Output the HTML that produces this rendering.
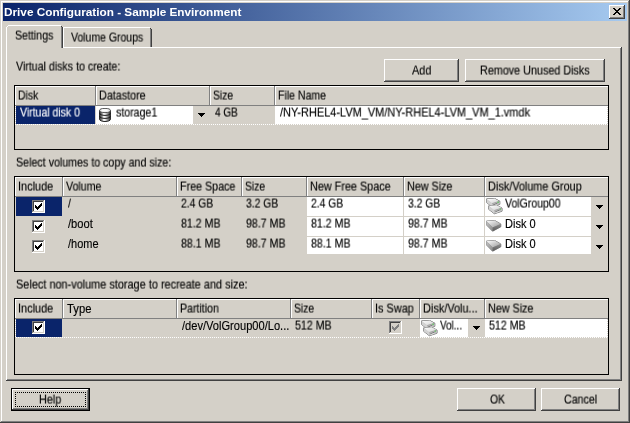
<!DOCTYPE html>
<html><head><meta charset="utf-8"><title>Drive Configuration - Sample Environment</title>
<style>
html,body{margin:0;padding:0;}
body{width:630px;height:423px;overflow:hidden;background:#d4d0c8;position:relative;font-family:"Liberation Sans",sans-serif;font-size:11px;}
#w{position:absolute;left:0;top:0;width:630px;height:423px;overflow:hidden;background:#d4d0c8;}
#w div,#w span,#w svg{position:absolute;display:block;}
.t{line-height:13px;height:13px;white-space:nowrap;font-size:11px;transform:scaleY(1.14);transform-origin:0 10.3px;will-change:transform;-webkit-text-stroke-width:0.13px;}
.b{-webkit-text-stroke-width:0;}
</style></head><body><div id="w">
<div style="left:1px;top:1px;width:627px;height:1px;background:#fff;"></div>
<div style="left:1px;top:1px;width:1px;height:420px;background:#fff;"></div>
<div style="left:628px;top:1px;width:1px;height:421px;background:#808080;"></div>
<div style="left:1px;top:421px;width:628px;height:1px;background:#808080;"></div>
<div style="left:629px;top:0px;width:1px;height:423px;background:#404040;"></div>
<div style="left:0px;top:422px;width:630px;height:1px;background:#404040;"></div>
<div style="left:3px;top:3px;width:624px;height:18px;background:linear-gradient(to right,#0a246a,#a6caf0);"></div>
<span class="t b" style="left:4.0px;top:6px;color:#fff;transform:scale(1.0702,1);font-weight:bold;">Drive Configuration - Sample Environment</span>
<div style="left:609px;top:5px;width:16px;height:14px;background:#404040;"></div>
<div style="left:609px;top:5px;width:15px;height:13px;background:#fff;"></div>
<div style="left:610px;top:6px;width:14px;height:12px;background:#808080;"></div>
<div style="left:610px;top:6px;width:13px;height:11px;background:#d4d0c8;"></div>
<svg style="left:613px;top:8px" width="8" height="7" viewBox="0 0 8 7"><path d="M0 0h2v1h1v1h2v-1h1v-1h2v1h-1v1h-1v1h-1v1h1v1h1v1h1v1h-2v-1h-1v-1h-2v1h-1v1h-2v-1h1v-1h1v-1h1v-1h-1v-1h-1v-1h-1z" fill="#000" shape-rendering="crispEdges"/></svg>
<div style="left:6px;top:47px;width:615px;height:1px;background:#fff;"></div>
<div style="left:6px;top:47px;width:1px;height:333px;background:#fff;"></div>
<div style="left:620px;top:48px;width:1px;height:332px;background:#808080;"></div>
<div style="left:7px;top:379px;width:614px;height:1px;background:#808080;"></div>
<div style="left:621px;top:47px;width:1px;height:334px;background:#404040;"></div>
<div style="left:6px;top:380px;width:616px;height:1px;background:#404040;"></div>
<div style="left:63px;top:27px;width:87px;height:1px;background:#fff;"></div>
<div style="left:63px;top:28px;width:1px;height:19px;background:#fff;"></div>
<div style="left:150px;top:28px;width:1px;height:1px;background:#404040;"></div>
<div style="left:150px;top:29px;width:1px;height:18px;background:#808080;"></div>
<div style="left:151px;top:29px;width:1px;height:18px;background:#404040;"></div>
<div style="left:6px;top:25px;width:57px;height:23px;background:#d4d0c8;"></div>
<div style="left:8px;top:25px;width:53px;height:1px;background:#fff;"></div>
<div style="left:6px;top:27px;width:1px;height:21px;background:#fff;"></div>
<div style="left:7px;top:26px;width:1px;height:1px;background:#fff;"></div>
<div style="left:61px;top:26px;width:1px;height:1px;background:#404040;"></div>
<div style="left:61px;top:27px;width:1px;height:21px;background:#808080;"></div>
<div style="left:62px;top:27px;width:1px;height:21px;background:#404040;"></div>
<span class="t " style="left:15.0px;top:30px;color:#000;transform:scale(0.9635,1.14);">Settings</span>
<span class="t " style="left:71.0px;top:32px;color:#000;transform:scale(0.9519,1.14);">Volume Groups</span>
<span class="t " style="left:16.0px;top:61px;color:#000;transform:scale(0.9657,1.14);">Virtual disks to create:</span>
<span class="t " style="left:16.0px;top:157px;color:#000;transform:scale(0.9692,1.14);">Select volumes to copy and size:</span>
<span class="t " style="left:16.0px;top:279px;color:#000;transform:scale(0.9912,1.14);">Select non-volume storage to recreate and size:</span>
<div style="left:384px;top:59px;width:75px;height:23px;background:#404040;"></div>
<div style="left:384px;top:59px;width:74px;height:22px;background:#fff;"></div>
<div style="left:385px;top:60px;width:73px;height:21px;background:#808080;"></div>
<div style="left:385px;top:60px;width:72px;height:20px;background:#d4d0c8;"></div>
<span class="t " style="left:412.0px;top:65px;color:#000;transform:scale(0.987,1.14);">Add</span>
<div style="left:465px;top:59px;width:140px;height:23px;background:#404040;"></div>
<div style="left:465px;top:59px;width:139px;height:22px;background:#fff;"></div>
<div style="left:466px;top:60px;width:138px;height:21px;background:#808080;"></div>
<div style="left:466px;top:60px;width:137px;height:20px;background:#d4d0c8;"></div>
<span class="t " style="left:480.0px;top:65px;color:#000;transform:scale(0.9807,1.14);">Remove Unused Disks</span>
<div style="left:11px;top:388px;width:79px;height:23px;background:#000;"></div>
<div style="left:12px;top:389px;width:77px;height:21px;background:#404040;"></div>
<div style="left:12px;top:389px;width:76px;height:20px;background:#fff;"></div>
<div style="left:13px;top:390px;width:75px;height:19px;background:#808080;"></div>
<div style="left:13px;top:390px;width:74px;height:18px;background:#d4d0c8;"></div>
<span class="t " style="left:39.0px;top:394px;color:#000;transform:scale(0.9823,1.14);">Help</span>
<div style="left:15px;top:392px;width:71px;height:15px;background:transparent;outline:1px dotted #000;outline-offset:-1px;"></div>
<div style="left:457px;top:388px;width:79px;height:23px;background:#404040;"></div>
<div style="left:457px;top:388px;width:78px;height:22px;background:#fff;"></div>
<div style="left:458px;top:389px;width:77px;height:21px;background:#808080;"></div>
<div style="left:458px;top:389px;width:76px;height:20px;background:#d4d0c8;"></div>
<span class="t " style="left:490.0px;top:394px;color:#000;transform:scale(0.94,1.14);">OK</span>
<div style="left:541px;top:388px;width:79px;height:23px;background:#404040;"></div>
<div style="left:541px;top:388px;width:78px;height:22px;background:#fff;"></div>
<div style="left:542px;top:389px;width:77px;height:21px;background:#808080;"></div>
<div style="left:542px;top:389px;width:76px;height:20px;background:#d4d0c8;"></div>
<span class="t " style="left:564.0px;top:394px;color:#000;transform:scale(0.9673,1.14);">Cancel</span>
<div style="left:14px;top:85px;width:595px;height:65px;background:#000;"></div>
<div style="left:15px;top:86px;width:593px;height:63px;background:#d4d0c8;"></div>
<div style="left:15px;top:86px;width:593px;height:1px;background:#fff;"></div>
<div style="left:15px;top:105px;width:593px;height:1px;background:#808080;"></div>
<div style="left:15px;top:86px;width:1px;height:19px;background:#fff;"></div>
<div style="left:95px;top:86px;width:1px;height:20px;background:#808080;"></div>
<span class="t " style="left:18.0px;top:90px;color:#000;transform:scale(0.94,1.14);">Disk</span>
<div style="left:96px;top:86px;width:1px;height:19px;background:#fff;"></div>
<div style="left:209px;top:86px;width:1px;height:20px;background:#808080;"></div>
<span class="t " style="left:99.0px;top:90px;color:#000;transform:scale(0.9793,1.14);">Datastore</span>
<div style="left:210px;top:86px;width:1px;height:19px;background:#fff;"></div>
<div style="left:274px;top:86px;width:1px;height:20px;background:#808080;"></div>
<span class="t " style="left:213.0px;top:90px;color:#000;transform:scale(0.94,1.14);">Size</span>
<div style="left:275px;top:86px;width:1px;height:19px;background:#fff;"></div>
<span class="t " style="left:278.0px;top:90px;color:#000;transform:scale(0.9584,1.14);">File Name</span>
<div style="left:16px;top:106px;width:79px;height:18px;background:#0a246a;"></div>
<span class="t " style="left:20.0px;top:107px;color:#fff;transform:scale(0.9543,1.14);">Virtual disk 0</span>
<div style="left:96px;top:106px;width:97px;height:18px;background:#fff;"></div>
<span class="t " style="left:116.0px;top:107px;color:#000;transform:scale(0.9623,1.14);">storage1</span>
<div style="left:198px;top:113px;width:7px;height:1px;background:#000;"></div>
<div style="left:199px;top:114px;width:5px;height:1px;background:#000;"></div>
<div style="left:200px;top:115px;width:3px;height:1px;background:#000;"></div>
<div style="left:201px;top:116px;width:1px;height:1px;background:#000;"></div>
<span class="t " style="left:215.0px;top:107px;color:#000;transform:scale(0.9032,1.14);">4 GB</span>
<div style="left:275px;top:106px;width:333px;height:18px;background:#fff;"></div>
<span class="t " style="left:280.0px;top:107px;color:#000;transform:scale(0.9976,1.14);">/NY-RHEL4-LVM_VM/NY-RHEL4-LVM_VM_1.vmdk</span>
<div style="left:15px;top:124px;width:593px;height:1px;background:repeating-linear-gradient(to right,#fff 0,#fff 1px,#d4d0c8 1px,#d4d0c8 2px);"></div>
<div style="left:15px;top:106px;width:1px;height:18px;background:repeating-linear-gradient(to bottom,#fff 0,#fff 1px,#d4d0c8 1px,#d4d0c8 2px);"></div>
<div style="left:607px;top:106px;width:1px;height:18px;background:repeating-linear-gradient(to bottom,#fff 0,#fff 1px,#d4d0c8 1px,#d4d0c8 2px);"></div>
<svg style="left:99px;top:108px" width="12" height="14" viewBox="0 0 12 14">
<defs><linearGradient id="cg" x1="0" x2="1"><stop offset="0" stop-color="#3a3a3a"/><stop offset=".22" stop-color="#8a8a8a"/><stop offset=".38" stop-color="#ffffff"/><stop offset=".5" stop-color="#f0f0f0"/><stop offset=".72" stop-color="#9a9a9a"/><stop offset="1" stop-color="#2a2a2a"/></linearGradient></defs>
<path d="M.6 2.500v8.800c0 1.300 2.400 2.200 5.400 2.200s5.400-.9 5.400-2.200v-8.800z" fill="url(#cg)" stroke="#222" stroke-width="1"/>
<path d="M.6 5.300c0 1.200 2.400 2.100 5.400 2.100s5.400-.9 5.400-2.100M.6 8.300c0 1.200 2.400 2.100 5.400 2.100s5.400-.9 5.400-2.100" fill="none" stroke="#1a1a1a" stroke-width="1"/>
<ellipse cx="6" cy="2.500" rx="5.400" ry="2.100" fill="#ececec" stroke="#444" stroke-width=".9"/>
<ellipse cx="5.500" cy="2.300" rx="3.200" ry="1" fill="#fff"/>
</svg>
<div style="left:14px;top:176px;width:595px;height:96px;background:#000;"></div>
<div style="left:15px;top:177px;width:593px;height:94px;background:#d4d0c8;"></div>
<div style="left:15px;top:177px;width:593px;height:1px;background:#fff;"></div>
<div style="left:15px;top:196px;width:593px;height:1px;background:#808080;"></div>
<div style="left:15px;top:177px;width:1px;height:19px;background:#fff;"></div>
<div style="left:62px;top:177px;width:1px;height:20px;background:#808080;"></div>
<span class="t " style="left:18.0px;top:181px;color:#000;transform:scale(0.9929,1.14);">Include</span>
<div style="left:63px;top:177px;width:1px;height:19px;background:#fff;"></div>
<div style="left:176px;top:177px;width:1px;height:20px;background:#808080;"></div>
<span class="t " style="left:66.0px;top:181px;color:#000;transform:scale(0.9649,1.14);">Volume</span>
<div style="left:177px;top:177px;width:1px;height:19px;background:#fff;"></div>
<div style="left:241px;top:177px;width:1px;height:20px;background:#808080;"></div>
<span class="t " style="left:180.0px;top:181px;color:#000;transform:scale(0.9725,1.14);">Free Space</span>
<div style="left:242px;top:177px;width:1px;height:19px;background:#fff;"></div>
<div style="left:306px;top:177px;width:1px;height:20px;background:#808080;"></div>
<span class="t " style="left:245.0px;top:181px;color:#000;transform:scale(0.94,1.14);">Size</span>
<div style="left:307px;top:177px;width:1px;height:19px;background:#fff;"></div>
<div style="left:403px;top:177px;width:1px;height:20px;background:#808080;"></div>
<span class="t " style="left:310.0px;top:181px;color:#000;transform:scale(0.9851,1.14);">New Free Space</span>
<div style="left:404px;top:177px;width:1px;height:19px;background:#fff;"></div>
<div style="left:484px;top:177px;width:1px;height:20px;background:#808080;"></div>
<span class="t " style="left:407.0px;top:181px;color:#000;transform:scale(0.9803,1.14);">New Size</span>
<div style="left:485px;top:177px;width:1px;height:19px;background:#fff;"></div>
<span class="t " style="left:488.0px;top:181px;color:#000;transform:scale(0.9881,1.14);">Disk/Volume Group</span>
<div style="left:16px;top:197px;width:46px;height:19px;background:#0a246a;"></div>
<div style="left:32px;top:200px;width:13px;height:13px;background:#fff;"></div>
<div style="left:32px;top:200px;width:12px;height:12px;background:#808080;"></div>
<div style="left:33px;top:201px;width:11px;height:11px;background:#d4d0c8;"></div>
<div style="left:33px;top:201px;width:10px;height:10px;background:#404040;"></div>
<div style="left:34px;top:202px;width:9px;height:9px;background:#fff;"></div>
<div style="left:35px;top:205px;width:1px;height:3px;background:#000;"></div>
<div style="left:36px;top:206px;width:1px;height:3px;background:#000;"></div>
<div style="left:37px;top:207px;width:1px;height:3px;background:#000;"></div>
<div style="left:38px;top:206px;width:1px;height:3px;background:#000;"></div>
<div style="left:39px;top:205px;width:1px;height:3px;background:#000;"></div>
<div style="left:40px;top:204px;width:1px;height:3px;background:#000;"></div>
<div style="left:41px;top:203px;width:1px;height:3px;background:#000;"></div>
<span class="t " style="left:68.0px;top:198px;color:#000;transform:scale(0.94,1.14);">/</span>
<span class="t " style="left:181.0px;top:198px;color:#000;transform:scale(0.94,1.14);">2.4 GB</span>
<span class="t " style="left:246.0px;top:198px;color:#000;transform:scale(0.94,1.14);">3.2 GB</span>
<div style="left:307px;top:197px;width:96px;height:19px;background:#fff;"></div>
<span class="t " style="left:311.0px;top:198px;color:#000;transform:scale(0.94,1.14);">2.4 GB</span>
<div style="left:404px;top:197px;width:80px;height:19px;background:#fff;"></div>
<span class="t " style="left:408.0px;top:198px;color:#000;transform:scale(0.94,1.14);">3.2 GB</span>
<div style="left:485px;top:197px;width:106px;height:19px;background:#fff;"></div>
<span class="t " style="left:505.0px;top:198px;color:#000;transform:scale(0.9557,1.14);">VolGroup00</span>
<div style="left:596px;top:205px;width:7px;height:1px;background:#000;"></div>
<div style="left:597px;top:206px;width:5px;height:1px;background:#000;"></div>
<div style="left:598px;top:207px;width:3px;height:1px;background:#000;"></div>
<div style="left:599px;top:208px;width:1px;height:1px;background:#000;"></div>
<div style="left:32px;top:220px;width:13px;height:13px;background:#fff;"></div>
<div style="left:32px;top:220px;width:12px;height:12px;background:#808080;"></div>
<div style="left:33px;top:221px;width:11px;height:11px;background:#d4d0c8;"></div>
<div style="left:33px;top:221px;width:10px;height:10px;background:#404040;"></div>
<div style="left:34px;top:222px;width:9px;height:9px;background:#fff;"></div>
<div style="left:35px;top:225px;width:1px;height:3px;background:#000;"></div>
<div style="left:36px;top:226px;width:1px;height:3px;background:#000;"></div>
<div style="left:37px;top:227px;width:1px;height:3px;background:#000;"></div>
<div style="left:38px;top:226px;width:1px;height:3px;background:#000;"></div>
<div style="left:39px;top:225px;width:1px;height:3px;background:#000;"></div>
<div style="left:40px;top:224px;width:1px;height:3px;background:#000;"></div>
<div style="left:41px;top:223px;width:1px;height:3px;background:#000;"></div>
<span class="t " style="left:68.0px;top:218px;color:#000;transform:scale(1.0136,1.14);">/boot</span>
<span class="t " style="left:181.0px;top:218px;color:#000;transform:scale(0.9629,1.14);">81.2 MB</span>
<span class="t " style="left:246.0px;top:218px;color:#000;transform:scale(0.9629,1.14);">98.7 MB</span>
<div style="left:307px;top:217px;width:96px;height:19px;background:#fff;"></div>
<span class="t " style="left:311.0px;top:218px;color:#000;transform:scale(0.9629,1.14);">81.2 MB</span>
<div style="left:404px;top:217px;width:80px;height:19px;background:#fff;"></div>
<span class="t " style="left:408.0px;top:218px;color:#000;transform:scale(0.9629,1.14);">98.7 MB</span>
<div style="left:485px;top:217px;width:106px;height:19px;background:#fff;"></div>
<span class="t " style="left:505.0px;top:218px;color:#000;transform:scale(1.0027,1.14);">Disk 0</span>
<div style="left:596px;top:225px;width:7px;height:1px;background:#000;"></div>
<div style="left:597px;top:226px;width:5px;height:1px;background:#000;"></div>
<div style="left:598px;top:227px;width:3px;height:1px;background:#000;"></div>
<div style="left:599px;top:228px;width:1px;height:1px;background:#000;"></div>
<div style="left:32px;top:240px;width:13px;height:13px;background:#fff;"></div>
<div style="left:32px;top:240px;width:12px;height:12px;background:#808080;"></div>
<div style="left:33px;top:241px;width:11px;height:11px;background:#d4d0c8;"></div>
<div style="left:33px;top:241px;width:10px;height:10px;background:#404040;"></div>
<div style="left:34px;top:242px;width:9px;height:9px;background:#fff;"></div>
<div style="left:35px;top:245px;width:1px;height:3px;background:#000;"></div>
<div style="left:36px;top:246px;width:1px;height:3px;background:#000;"></div>
<div style="left:37px;top:247px;width:1px;height:3px;background:#000;"></div>
<div style="left:38px;top:246px;width:1px;height:3px;background:#000;"></div>
<div style="left:39px;top:245px;width:1px;height:3px;background:#000;"></div>
<div style="left:40px;top:244px;width:1px;height:3px;background:#000;"></div>
<div style="left:41px;top:243px;width:1px;height:3px;background:#000;"></div>
<span class="t " style="left:68.0px;top:238px;color:#000;transform:scale(1.0004,1.14);">/home</span>
<span class="t " style="left:181.0px;top:238px;color:#000;transform:scale(0.9629,1.14);">88.1 MB</span>
<span class="t " style="left:246.0px;top:238px;color:#000;transform:scale(0.9629,1.14);">98.7 MB</span>
<div style="left:307px;top:237px;width:96px;height:17px;background:#fff;"></div>
<span class="t " style="left:311.0px;top:238px;color:#000;transform:scale(0.9629,1.14);">88.1 MB</span>
<div style="left:404px;top:237px;width:80px;height:17px;background:#fff;"></div>
<span class="t " style="left:408.0px;top:238px;color:#000;transform:scale(0.9629,1.14);">98.7 MB</span>
<div style="left:485px;top:237px;width:106px;height:17px;background:#fff;"></div>
<span class="t " style="left:505.0px;top:238px;color:#000;transform:scale(1.0027,1.14);">Disk 0</span>
<div style="left:596px;top:245px;width:7px;height:1px;background:#000;"></div>
<div style="left:597px;top:246px;width:5px;height:1px;background:#000;"></div>
<div style="left:598px;top:247px;width:3px;height:1px;background:#000;"></div>
<div style="left:599px;top:248px;width:1px;height:1px;background:#000;"></div>
<div style="left:14px;top:298px;width:595px;height:77px;background:#000;"></div>
<div style="left:15px;top:299px;width:593px;height:75px;background:#d4d0c8;"></div>
<div style="left:15px;top:299px;width:593px;height:1px;background:#fff;"></div>
<div style="left:15px;top:318px;width:593px;height:1px;background:#808080;"></div>
<div style="left:15px;top:299px;width:1px;height:19px;background:#fff;"></div>
<div style="left:62px;top:299px;width:1px;height:20px;background:#808080;"></div>
<span class="t " style="left:18.0px;top:303px;color:#000;transform:scale(0.9929,1.14);">Include</span>
<div style="left:63px;top:299px;width:1px;height:19px;background:#fff;"></div>
<div style="left:176px;top:299px;width:1px;height:20px;background:#808080;"></div>
<span class="t " style="left:67.0px;top:303px;color:#000;transform:scale(1.0244,1.14);">Type</span>
<div style="left:177px;top:299px;width:1px;height:19px;background:#fff;"></div>
<div style="left:290px;top:299px;width:1px;height:20px;background:#808080;"></div>
<span class="t " style="left:180.0px;top:303px;color:#000;transform:scale(0.9635,1.14);">Partition</span>
<div style="left:291px;top:299px;width:1px;height:19px;background:#fff;"></div>
<div style="left:371px;top:299px;width:1px;height:20px;background:#808080;"></div>
<span class="t " style="left:294.0px;top:303px;color:#000;transform:scale(0.94,1.14);">Size</span>
<div style="left:372px;top:299px;width:1px;height:19px;background:#fff;"></div>
<div style="left:419px;top:299px;width:1px;height:20px;background:#808080;"></div>
<span class="t " style="left:375.0px;top:303px;color:#000;transform:scale(0.9883,1.14);">Is Swap</span>
<div style="left:420px;top:299px;width:1px;height:19px;background:#fff;"></div>
<div style="left:484px;top:299px;width:1px;height:20px;background:#808080;"></div>
<span class="t " style="left:423.0px;top:303px;color:#000;transform:scale(0.9908,1.14);">Disk/Volu...</span>
<div style="left:485px;top:299px;width:1px;height:19px;background:#fff;"></div>
<span class="t " style="left:488.0px;top:303px;color:#000;transform:scale(0.9803,1.14);">New Size</span>
<div style="left:16px;top:319px;width:46px;height:18px;background:#0a246a;"></div>
<div style="left:32px;top:321px;width:13px;height:13px;background:#fff;"></div>
<div style="left:32px;top:321px;width:12px;height:12px;background:#808080;"></div>
<div style="left:33px;top:322px;width:11px;height:11px;background:#d4d0c8;"></div>
<div style="left:33px;top:322px;width:10px;height:10px;background:#404040;"></div>
<div style="left:34px;top:323px;width:9px;height:9px;background:#fff;"></div>
<div style="left:35px;top:326px;width:1px;height:3px;background:#000;"></div>
<div style="left:36px;top:327px;width:1px;height:3px;background:#000;"></div>
<div style="left:37px;top:328px;width:1px;height:3px;background:#000;"></div>
<div style="left:38px;top:327px;width:1px;height:3px;background:#000;"></div>
<div style="left:39px;top:326px;width:1px;height:3px;background:#000;"></div>
<div style="left:40px;top:325px;width:1px;height:3px;background:#000;"></div>
<div style="left:41px;top:324px;width:1px;height:3px;background:#000;"></div>
<span class="t " style="left:182.0px;top:320px;color:#000;transform:scale(1.0084,1.14);">/dev/VolGroup00/Lo...</span>
<span class="t " style="left:295.0px;top:320px;color:#000;transform:scale(0.9649,1.14);">512 MB</span>
<div style="left:389px;top:321px;width:13px;height:13px;background:#fff;"></div>
<div style="left:389px;top:321px;width:12px;height:12px;background:#808080;"></div>
<div style="left:390px;top:322px;width:11px;height:11px;background:#d4d0c8;"></div>
<div style="left:390px;top:322px;width:10px;height:10px;background:#404040;"></div>
<div style="left:391px;top:323px;width:9px;height:9px;background:#d4d0c8;"></div>
<div style="left:392px;top:326px;width:1px;height:3px;background:#808080;"></div>
<div style="left:393px;top:327px;width:1px;height:3px;background:#808080;"></div>
<div style="left:394px;top:328px;width:1px;height:3px;background:#808080;"></div>
<div style="left:395px;top:327px;width:1px;height:3px;background:#808080;"></div>
<div style="left:396px;top:326px;width:1px;height:3px;background:#808080;"></div>
<div style="left:397px;top:325px;width:1px;height:3px;background:#808080;"></div>
<div style="left:398px;top:324px;width:1px;height:3px;background:#808080;"></div>
<div style="left:420px;top:319px;width:48px;height:18px;background:#fff;"></div>
<span class="t " style="left:440.0px;top:320px;color:#000;transform:scale(0.9,1.14);">Vol...</span>
<div style="left:473px;top:326px;width:7px;height:1px;background:#000;"></div>
<div style="left:474px;top:327px;width:5px;height:1px;background:#000;"></div>
<div style="left:475px;top:328px;width:3px;height:1px;background:#000;"></div>
<div style="left:476px;top:329px;width:1px;height:1px;background:#000;"></div>
<div style="left:485px;top:319px;width:123px;height:18px;background:#fff;"></div>
<span class="t " style="left:489.0px;top:320px;color:#000;transform:scale(0.9649,1.14);">512 MB</span>
<div style="left:15px;top:337px;width:593px;height:1px;background:repeating-linear-gradient(to right,#d4d0c8 0,#d4d0c8 1px,#fff 1px,#fff 2px);"></div>
<div style="left:15px;top:319px;width:1px;height:18px;background:repeating-linear-gradient(to bottom,#d4d0c8 0,#d4d0c8 1px,#fff 1px,#fff 2px);"></div>
<div style="left:607px;top:319px;width:1px;height:18px;background:repeating-linear-gradient(to bottom,#d4d0c8 0,#d4d0c8 1px,#fff 1px,#fff 2px);"></div>
<svg width="0" height="0" style="left:0;top:0"><defs><linearGradient id="dg" x1="0" y1="0" x2="1" y2="1"><stop offset="0" stop-color="#ffffff"/><stop offset=".4" stop-color="#d6d6d6"/><stop offset="1" stop-color="#989898"/></linearGradient><linearGradient id="vg" x1="0" y1="0" x2="1" y2="1"><stop offset="0" stop-color="#ffffff"/><stop offset=".6" stop-color="#e4e4e4"/><stop offset="1" stop-color="#c2c2c2"/></linearGradient><linearGradient id="dl" x1="0" y1="0" x2="1" y2="1"><stop offset="0" stop-color="#c4c4c4"/><stop offset="1" stop-color="#8a8a8a"/></linearGradient><linearGradient id="df" x1="0" y1="0" x2="0" y2="1"><stop offset="0" stop-color="#8e8e8e"/><stop offset="1" stop-color="#5c5c5c"/></linearGradient></defs></svg>
<svg style="left:486px;top:198px" width="17" height="17" viewBox="0 0 17 17"><path d="M0.5 0.9L8.5 0.4L13.8 3.2L13.8 6.3L6.2 8.8L0.5 4.4z" fill="#c4c4c4" stroke="#585858" stroke-width=".9" stroke-linejoin="round"/><path d="M0.5 0.9L8.5 0.4L13.8 3.2L6.2 5.5z" fill="url(#vg)"/><path d="M0.5 0.9L6.2 5.5L6.2 8.8L0.5 4.4z" fill="#d2d2d2"/><path d="M6.2 5.5L13.8 3.2L13.8 6.3L6.2 8.8z" fill="#bcbcbc"/><path d="M6.2 5.5L13.8 3.2" stroke="#8a8a8a" stroke-width=".5" fill="none"/><path d="M7.2 7.0L11.4 5.300000000000001" stroke="#5a5a5a" stroke-width=".8" fill="none"/><path d="M7.2 7.8L11.4 6.1" stroke="#f4f4f4" stroke-width=".7" fill="none"/><circle cx="12.100000000000001" cy="4.2" r="0.7" fill="#49cc49"/><g transform="translate(2.2,6.9)"><path d="M0.5 0.9L8.5 0.4L13.8 3.2L13.8 6.3L6.2 8.8L0.5 4.4z" fill="#c4c4c4" stroke="#585858" stroke-width=".9" stroke-linejoin="round"/><path d="M0.5 0.9L8.5 0.4L13.8 3.2L6.2 5.5z" fill="url(#vg)"/><path d="M0.5 0.9L6.2 5.5L6.2 8.8L0.5 4.4z" fill="#d2d2d2"/><path d="M6.2 5.5L13.8 3.2L13.8 6.3L6.2 8.8z" fill="#bcbcbc"/><path d="M6.2 5.5L13.8 3.2" stroke="#8a8a8a" stroke-width=".5" fill="none"/><path d="M7.2 7.0L11.4 5.300000000000001" stroke="#5a5a5a" stroke-width=".8" fill="none"/><path d="M7.2 7.8L11.4 6.1" stroke="#f4f4f4" stroke-width=".7" fill="none"/><circle cx="12.100000000000001" cy="4.2" r="0.7" fill="#49cc49"/></g></svg>
<svg style="left:486px;top:220px" width="16" height="12" viewBox="0 0 16 12"><path d="M0.4 1.1L8.6 0.4L14.8 4L14.8 6.8L6.6 11.2L0.4 4.8z" fill="#8c8c8c" stroke="#6e6e6e" stroke-width=".9" stroke-linejoin="round"/><path d="M0.4 1.1L8.6 0.4L14.8 4L6.6 7.6z" fill="url(#dg)"/><path d="M0.4 1.1L6.6 7.6L6.6 11.2L0.4 4.8z" fill="url(#dl)"/><path d="M6.6 7.6L14.8 4L14.8 6.8L6.6 11.2z" fill="url(#df)"/></svg>
<svg style="left:486px;top:240px" width="16" height="12" viewBox="0 0 16 12"><path d="M0.4 1.1L8.6 0.4L14.8 4L14.8 6.8L6.6 11.2L0.4 4.8z" fill="#8c8c8c" stroke="#6e6e6e" stroke-width=".9" stroke-linejoin="round"/><path d="M0.4 1.1L8.6 0.4L14.8 4L6.6 7.6z" fill="url(#dg)"/><path d="M0.4 1.1L6.6 7.6L6.6 11.2L0.4 4.8z" fill="url(#dl)"/><path d="M6.6 7.6L14.8 4L14.8 6.8L6.6 11.2z" fill="url(#df)"/></svg>
<svg style="left:421px;top:320px" width="17" height="17" viewBox="0 0 17 17"><path d="M0.5 0.9L8.5 0.4L13.8 3.2L13.8 6.3L6.2 8.8L0.5 4.4z" fill="#c4c4c4" stroke="#585858" stroke-width=".9" stroke-linejoin="round"/><path d="M0.5 0.9L8.5 0.4L13.8 3.2L6.2 5.5z" fill="url(#vg)"/><path d="M0.5 0.9L6.2 5.5L6.2 8.8L0.5 4.4z" fill="#d2d2d2"/><path d="M6.2 5.5L13.8 3.2L13.8 6.3L6.2 8.8z" fill="#bcbcbc"/><path d="M6.2 5.5L13.8 3.2" stroke="#8a8a8a" stroke-width=".5" fill="none"/><path d="M7.2 7.0L11.4 5.300000000000001" stroke="#5a5a5a" stroke-width=".8" fill="none"/><path d="M7.2 7.8L11.4 6.1" stroke="#f4f4f4" stroke-width=".7" fill="none"/><circle cx="12.100000000000001" cy="4.2" r="0.7" fill="#49cc49"/><g transform="translate(2.2,6.9)"><path d="M0.5 0.9L8.5 0.4L13.8 3.2L13.8 6.3L6.2 8.8L0.5 4.4z" fill="#c4c4c4" stroke="#585858" stroke-width=".9" stroke-linejoin="round"/><path d="M0.5 0.9L8.5 0.4L13.8 3.2L6.2 5.5z" fill="url(#vg)"/><path d="M0.5 0.9L6.2 5.5L6.2 8.8L0.5 4.4z" fill="#d2d2d2"/><path d="M6.2 5.5L13.8 3.2L13.8 6.3L6.2 8.8z" fill="#bcbcbc"/><path d="M6.2 5.5L13.8 3.2" stroke="#8a8a8a" stroke-width=".5" fill="none"/><path d="M7.2 7.0L11.4 5.300000000000001" stroke="#5a5a5a" stroke-width=".8" fill="none"/><path d="M7.2 7.8L11.4 6.1" stroke="#f4f4f4" stroke-width=".7" fill="none"/><circle cx="12.100000000000001" cy="4.2" r="0.7" fill="#49cc49"/></g></svg>
</div></body></html>
